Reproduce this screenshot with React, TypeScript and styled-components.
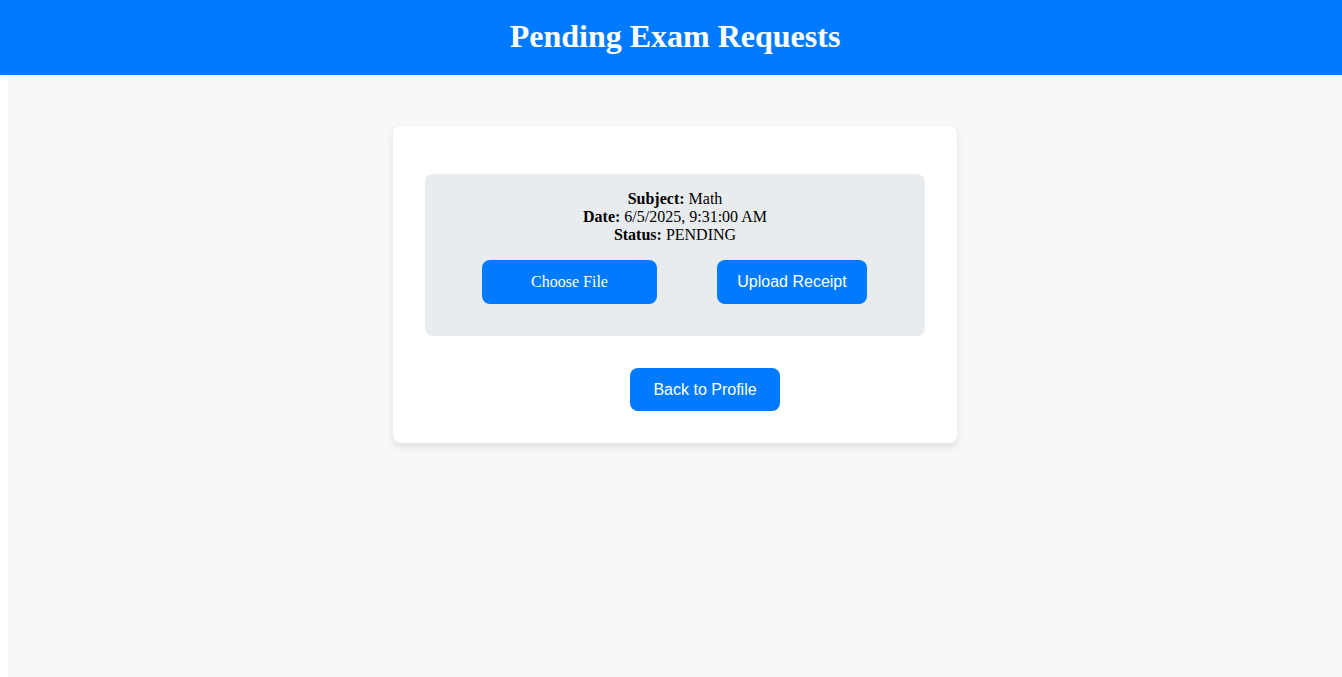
import React from 'react';
import styled, { createGlobalStyle } from 'styled-components';

const GlobalStyle = createGlobalStyle`
  html, body {
    margin: 0;
    padding: 0;
    background: #ffffff;
    font-family: "Liberation Serif", "Times New Roman", serif;
  }
`;

const Header = styled.header`
  display: flex;
  justify-content: center;
  align-items: center;
  height: 75px;
  background-color: #007bff;
  color: #ffffff;
`;

const Title = styled.h1`
  margin: -2px 0 0 8px;
  font-size: 32px;
  font-weight: bold;
  font-family: "Liberation Serif", "Times New Roman", serif;
`;

const Main = styled.main`
  margin-left: 8px;
  min-height: calc(100vh - 75px);
  padding-top: 51px;
  box-sizing: border-box;
  background-color: #f8f8f8;
`;

const Card = styled.section`
  width: 564px;
  margin: 0 auto;
  padding: 48px 32px 32px;
  box-sizing: border-box;
  background: #ffffff;
  border-radius: 8px;
  box-shadow: 0 4px 8px rgba(0, 0, 0, 0.1);
`;

const RequestBox = styled.div`
  padding: 16px 16px 32px;
  background: #e9ecef;
  border-radius: 8px;
  text-align: center;
`;

const Line = styled.div`
  font-size: 16px;
  line-height: 18px;
  color: #000000;
`;

const ButtonRow = styled.div`
  display: flex;
  justify-content: center;
  gap: 60px;
  margin-top: 16px;
  padding-right: 1px;
`;

const BlueButton = styled.button<{ $serif?: boolean; $width: number }>`
  width: ${p => p.$width}px;
  height: 44px;
  border: none;
  border-radius: 8px;
  background-color: #007bff;
  color: #ffffff;
  font-size: 16px;
  font-family: ${p =>
    p.$serif ? '"Liberation Serif", "Times New Roman", serif' : '"Liberation Sans", Arial, sans-serif'};
  cursor: pointer;
`;

const Footer = styled.div`
  display: flex;
  justify-content: center;
  padding-left: 60px;
  margin-top: 32px;
`;

export default function App() {
  return (
    <>
      <GlobalStyle />
      <Header>
        <Title>Pending Exam Requests</Title>
      </Header>
      <Main>
        <Card>
          <RequestBox>
            <Line>
              <b>Subject:</b> Math
            </Line>
            <Line>
              <b>Date:</b> 6/5/2025, 9:31:00 AM
            </Line>
            <Line>
              <b>Status:</b> PENDING
            </Line>
            <ButtonRow>
              <BlueButton $serif $width={175}>Choose File</BlueButton>
              <BlueButton $width={150}>Upload Receipt</BlueButton>
            </ButtonRow>
          </RequestBox>
          <Footer>
            <BlueButton $width={150} style={{ height: 43 }}>Back to Profile</BlueButton>
          </Footer>
        </Card>
      </Main>
    </>
  );
}
